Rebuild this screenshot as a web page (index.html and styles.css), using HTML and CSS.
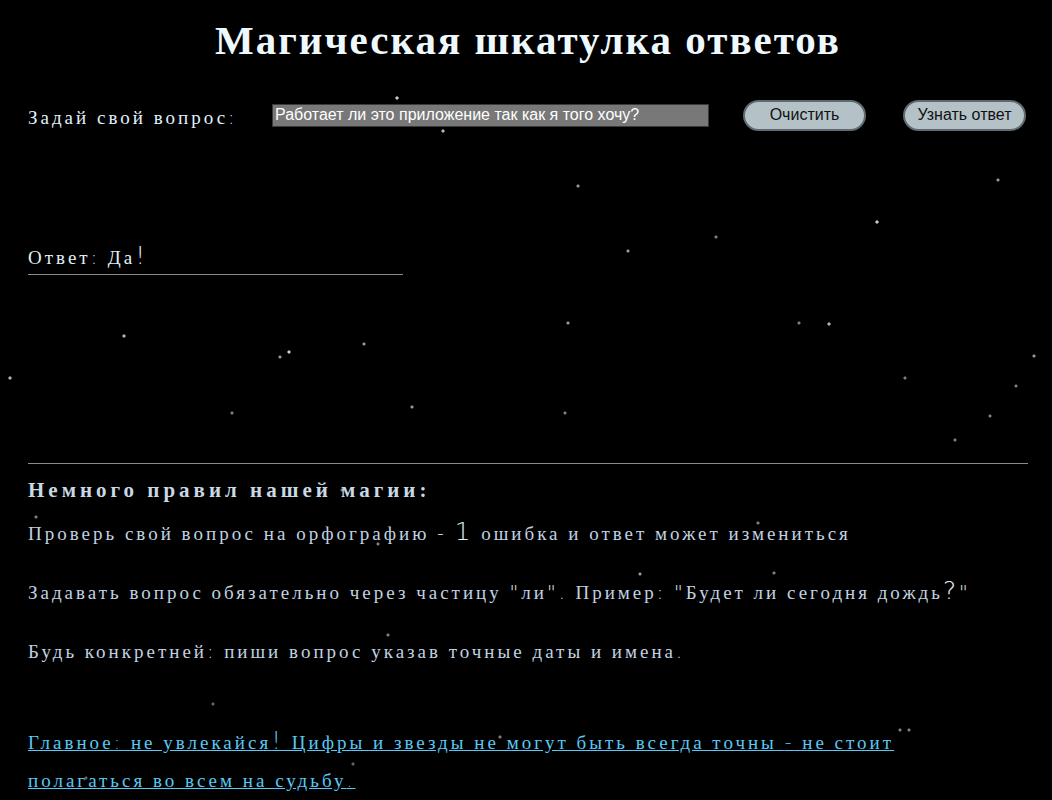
FILE: index.html
```html
<!DOCTYPE html>
<html lang="ru">
<head>
<meta charset="utf-8">
<title>Магическая шкатулка ответов</title>
<link rel="stylesheet" href="styles.css">
</head>
<body>
<main class="page">
  <h1 class="title">Магическая шкатулка ответов</h1>

  <div class="ask-row">
    <label class="ask-label" for="q">Задай свой вопрос<span class="thin">:</span></label>
    <input class="ask-input" id="q" type="text" value="Работает ли это приложение так как я того хочу?">
    <button class="btn btn-clear" type="button">Очистить</button>
    <button class="btn btn-answer" type="button">Узнать ответ</button>
  </div>

  <div class="answer">
    <p class="answer-text">Ответ<span class="thin">:</span> Да<span class="thin big">!</span></p>
  </div>

  <section class="rules">
    <h2 class="rules-title">Немного правил нашей магии:</h2>
    <p class="rule">Проверь свой вопрос на орфографию <span class="thin">-</span> <span class="thin big">1</span> ошибка и ответ может измениться</p>
    <p class="rule">Задавать вопрос обязательно через частицу <span class="thin">"</span>ли<span class="thin">"</span><span class="thin">.</span> Пример<span class="thin">:</span> <span class="thin">"</span>Будет ли сегодня дождь<span class="thin big">?</span><span class="thin">"</span></p>
    <p class="rule">Будь конкретней<span class="thin">:</span> пиши вопрос указав точные даты и имена<span class="thin">.</span></p>
    <p class="rule rule-link"><a class="link" href="#">Главное<span class="thin">:</span> не увлекайся<span class="thin big">!</span> Цифры и звезды не могут быть всегда точны <span class="thin">-</span> не стоит полагаться во всем на судьбу<span class="thin">.</span></a></p>
  </section>
</main>
</body>
</html>
```

FILE: styles.css
```css
html, body {
  margin: 0;
  padding: 0;
}

body {
  background-color: #000;
  background-image:
    radial-gradient(circle at 397px 98px, rgba(255,255,255,.8) 1.2px, transparent 2px),
    radial-gradient(circle at 443px 131px, rgba(255,255,255,.7) 1.2px, transparent 2px),
    radial-gradient(circle at 578px 186px, rgba(255,255,255,.6) 1px, transparent 2px),
    radial-gradient(circle at 998px 180px, rgba(255,255,255,.6) 1px, transparent 2px),
    radial-gradient(circle at 877px 222px, rgba(255,255,255,.8) 1.2px, transparent 2px),
    radial-gradient(circle at 716px 237px, rgba(255,255,255,.5) 1px, transparent 2px),
    radial-gradient(circle at 628px 251px, rgba(255,255,255,.6) 1px, transparent 2px),
    radial-gradient(circle at 829px 324px, rgba(255,255,255,.7) 1.2px, transparent 2px),
    radial-gradient(circle at 799px 323px, rgba(255,255,255,.5) 1px, transparent 2px),
    radial-gradient(circle at 568px 323px, rgba(255,255,255,.6) 1px, transparent 2px),
    radial-gradient(circle at 364px 344px, rgba(255,255,255,.6) 1px, transparent 2px),
    radial-gradient(circle at 289px 352px, rgba(255,255,255,.8) 1.2px, transparent 2px),
    radial-gradient(circle at 280px 357px, rgba(255,255,255,.6) 1px, transparent 2px),
    radial-gradient(circle at 124px 336px, rgba(255,255,255,.7) 1.2px, transparent 2px),
    radial-gradient(circle at 412px 407px, rgba(255,255,255,.6) 1px, transparent 2px),
    radial-gradient(circle at 10px 378px, rgba(255,255,255,.7) 1.2px, transparent 2px),
    radial-gradient(circle at 565px 413px, rgba(255,255,255,.5) 1px, transparent 2px),
    radial-gradient(circle at 232px 413px, rgba(255,255,255,.5) 1px, transparent 2px),
    radial-gradient(circle at 905px 378px, rgba(255,255,255,.5) 1px, transparent 2px),
    radial-gradient(circle at 1034px 356px, rgba(255,255,255,.6) 1px, transparent 2px),
    radial-gradient(circle at 990px 416px, rgba(255,255,255,.5) 1px, transparent 2px),
    radial-gradient(circle at 955px 440px, rgba(255,255,255,.5) 1px, transparent 2px),
    radial-gradient(circle at 1016px 386px, rgba(255,255,255,.5) 1px, transparent 2px),
    radial-gradient(circle at 36px 517px, rgba(255,255,255,.5) 1px, transparent 2px),
    radial-gradient(circle at 342px 490px, rgba(255,255,255,.5) 1px, transparent 2px),
    radial-gradient(circle at 378px 544px, rgba(255,255,255,.5) 1px, transparent 2px),
    radial-gradient(circle at 758px 523px, rgba(255,255,255,.5) 1px, transparent 2px),
    radial-gradient(circle at 640px 574px, rgba(255,255,255,.6) 1px, transparent 2px),
    radial-gradient(circle at 774px 573px, rgba(255,255,255,.5) 1px, transparent 2px),
    radial-gradient(circle at 388px 635px, rgba(255,255,255,.5) 1px, transparent 2px),
    radial-gradient(circle at 86px 778px, rgba(255,255,255,.4) 1px, transparent 2px),
    radial-gradient(circle at 213px 704px, rgba(255,255,255,.4) 1px, transparent 2px),
    radial-gradient(circle at 500px 737px, rgba(255,255,255,.5) 1px, transparent 2px),
    radial-gradient(circle at 900px 730px, rgba(255,255,255,.5) 1px, transparent 2px),
    radial-gradient(circle at 909px 730px, rgba(255,255,255,.5) 1px, transparent 2px),
    radial-gradient(circle at 353px 764px, rgba(255,255,255,.4) 1px, transparent 2px);
  background-repeat: no-repeat;
  color: #d2e4f0;
  font-family: "Liberation Serif", "Times New Roman", serif;
  min-height: 800px;
}

.page {
  padding: 0 24px 0 28px;
}

.thin {
  font-family: "DejaVu Sans", sans-serif;
  font-weight: 200;
  letter-spacing: 3px;
  line-height: 1;
  color: #e4eef6;
}

.link .thin {
  color: inherit;
}

.big {
  font-size: 1.3em;
  line-height: 0;
}

.title {
  margin: 0;
  padding-top: 14px;
  text-align: center;
  font-size: 41px;
  font-weight: bold;
  letter-spacing: 2px;
  color: #eef9ff;
  line-height: 52px;
}

.ask-row {
  display: flex;
  align-items: center;
  margin-top: 32px;
  height: 32px;
}

.ask-label {
  font-size: 19px;
  letter-spacing: 3px;
  color: #e0f0fa;
  width: 244px;
  margin-top: 8px;
}

.ask-input {
  width: 437px;
  height: 23px;
  box-sizing: border-box;
  background: #787878;
  border: 1px solid #3a3a3a;
  color: #fff;
  font-family: "Liberation Sans", Arial, sans-serif;
  font-size: 16px;
  padding: 0 2px;
  margin-top: 2px;
}

.btn {
  height: 31px;
  box-sizing: border-box;
  width: 123px;
  border-radius: 16px;
  border: 2px solid #5f6a70;
  background: #b4c2c8;
  color: #111;
  font-family: "Liberation Sans", Arial, sans-serif;
  font-size: 16px;
  padding: 0;
  margin-top: 2px;
}

.btn-clear {
  margin-left: 34px;
}

.btn-answer {
  margin-left: 37px;
}

.answer {
  margin-top: 116px;
  width: 375px;
  border-bottom: 1px solid #8a8a8a;
  padding-bottom: 4px;
}

.answer-text {
  margin: 0;
  font-size: 19px;
  letter-spacing: 3px;
  color: #e0f0fa;
  line-height: 24px;
}

.rules {
  margin-top: 188px;
  border-top: 1px solid #8a8a8a;
  padding-top: 12px;
}

.rules-title {
  margin: 0;
  font-size: 21px;
  font-weight: bold;
  letter-spacing: 4px;
  color: #c8d8e4;
  line-height: 28px;
}

.rule {
  margin: 0;
  font-size: 19px;
  letter-spacing: 3px;
  color: #c0d2e0;
  line-height: 38px;
  margin-top: 21px;
}

.rule:first-of-type {
  margin-top: 11px;
}

.rule-link {
  margin-top: 53px;
  max-width: 960px;
}

.link {
  color: #58c8f4;
}
```
